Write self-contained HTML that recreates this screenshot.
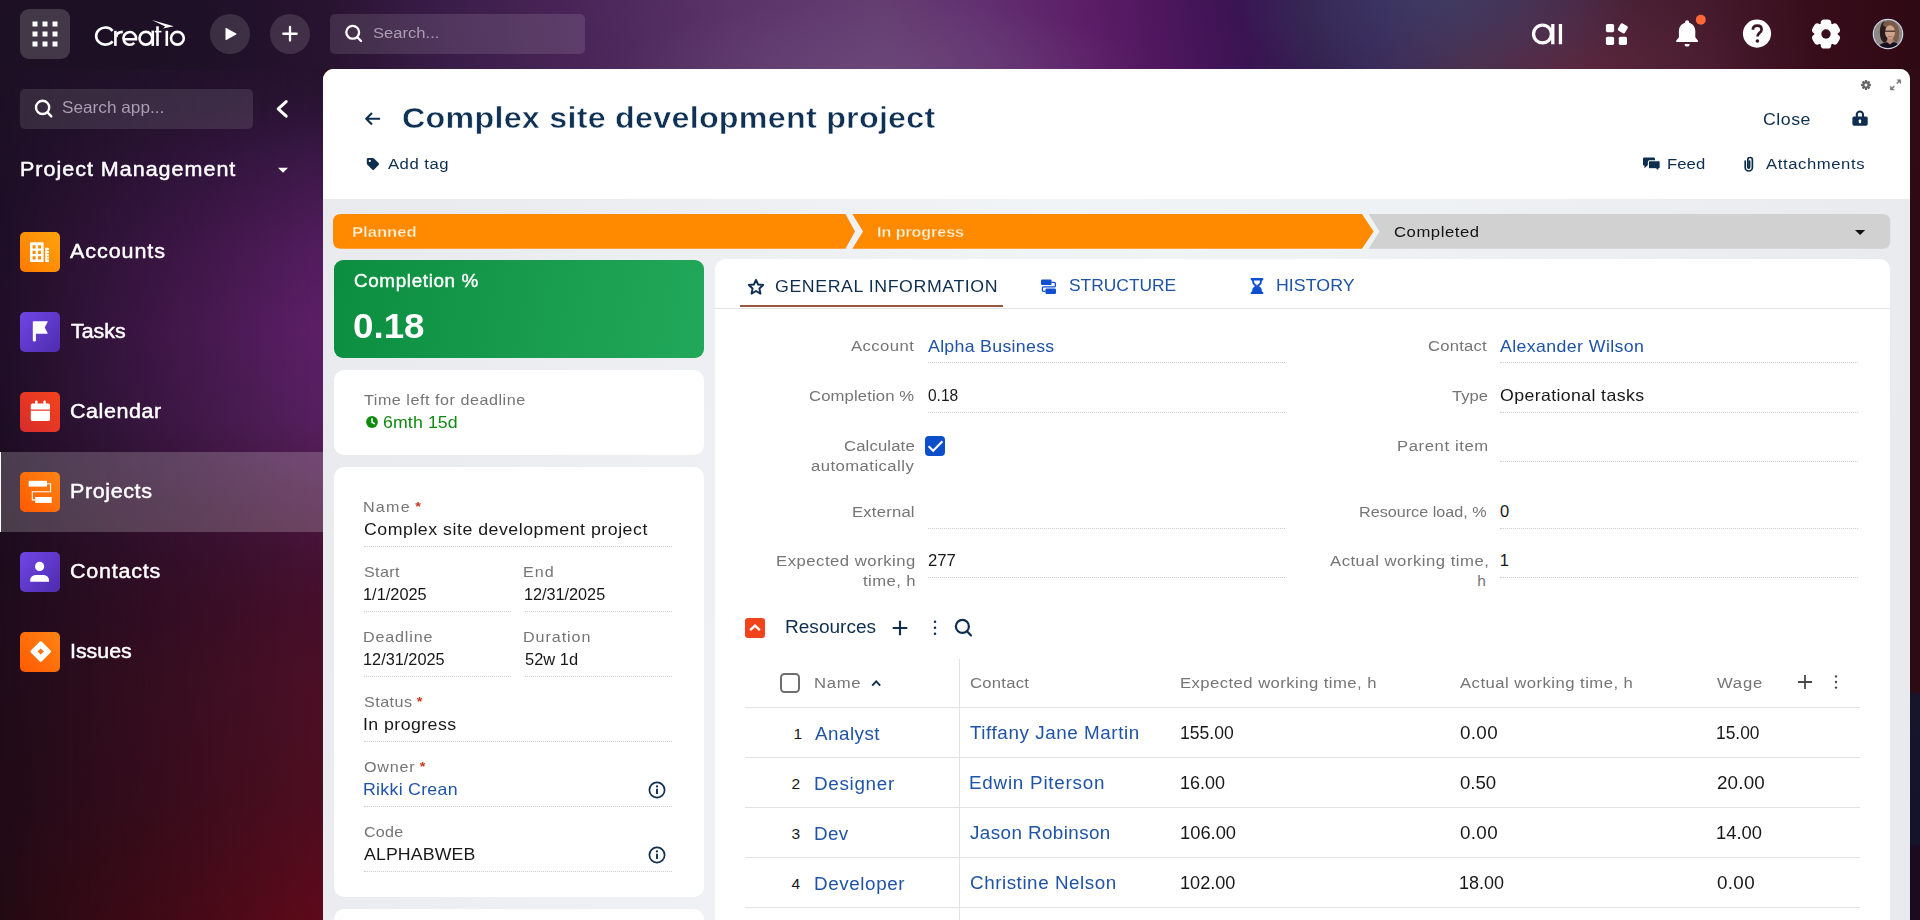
<!DOCTYPE html>
<html lang="en">
<head>
<meta charset="utf-8">
<title>Complex site development project</title>
<style>
*{box-sizing:border-box;margin:0;padding:0}
html,body{width:1920px;height:920px;overflow:hidden}
body{font-family:"Liberation Sans",sans-serif;color:#181818;position:relative;background:#2a0e1a}
#bgtop{left:0;top:0;width:1920px;height:69px;background:
  radial-gradient(ellipse 260px 70px at 880px 69px, rgba(112,76,126,.55), rgba(112,76,126,0) 100%),
  radial-gradient(ellipse 200px 100px at 1435px 0px, rgba(62,62,104,.72), rgba(62,62,104,0) 100%),
  radial-gradient(ellipse 200px 80px at 1560px 69px, rgba(100,40,60,.6), rgba(100,40,60,0) 100%),
  linear-gradient(82deg,#1c1023 0,#1e1026 200px,#27122f 323px,#3b1d49 450px,#4a2558 580px,#5a3468 730px,#643e71 880px,#623070 980px,#5c1e68 1080px,#4e165e 1155px,#3a1452 1235px,#33204f 1305px,#38285a 1380px,#44304f 1455px,#4a2a48 1530px,#4a2238 1600px,#451a2c 1700px,#380d1b 1800px,#2d0813 1920px)}
#bgside{left:0;top:69px;width:323px;height:851px;background:
  linear-gradient(180deg,#26122e 0,#2c1436 40px,#3c1848 91px,#531d5e 181px,#5d1f67 261px,#56205f 351px,#4a1640 441px,#461233 491px,#470f2b 541px,#4c1026 611px,#4e0e21 731px,#5e0a1a 851px)}
#bgside::after{content:"";position:absolute;left:0;top:0;width:323px;height:851px;
  background:linear-gradient(180deg,#1c1024 0,#190d20 120px,#170b1d 400px,#1a0b18 620px,#1c0a12 851px);
  -webkit-mask-image:linear-gradient(90deg,rgba(0,0,0,.9) 0,rgba(0,0,0,.78) 12%,rgba(0,0,0,.6) 32%,rgba(0,0,0,.34) 62%,rgba(0,0,0,.08) 90%,rgba(0,0,0,0) 100%);
  mask-image:linear-gradient(90deg,rgba(0,0,0,.9) 0,rgba(0,0,0,.78) 12%,rgba(0,0,0,.6) 32%,rgba(0,0,0,.34) 62%,rgba(0,0,0,.08) 90%,rgba(0,0,0,0) 100%)}
#bgright{left:1910px;top:69px;width:10px;height:851px;background:linear-gradient(180deg,#300a15 0,#2e0a14 622px,#17152a 626px,#15132a 774px,#1b0a20 778px,#1b0a20 851px)}
.abs{position:absolute}
.t{position:absolute;white-space:nowrap;line-height:1}
/* ---------- top bar ---------- */
#gridbtn{left:20px;top:9px;width:50px;height:50px;border-radius:9px;background:rgba(255,255,255,.17)}
.circ{width:40px;height:40px;border-radius:50%;background:rgba(255,255,255,.13)}
#gsearch{left:330px;top:14px;width:255px;height:40px;border-radius:5px;background:rgba(255,255,255,.115)}
/* ---------- sidebar ---------- */
#asearch{left:20px;top:89px;width:233px;height:40px;border-radius:5px;background:rgba(255,255,255,.11)}
.mi{position:absolute;left:20px;width:40px;height:40px;border-radius:5px}
.ml{position:absolute;left:70px;color:#fff;font-size:20px;white-space:nowrap;line-height:1;-webkit-text-stroke:.45px #fff}
#active{left:0;top:452px;width:323px;height:80px;background:rgba(255,255,255,.2);border-left:1.5px solid #fff}
/* ---------- main ---------- */
#main{left:323px;top:69px;width:1587px;height:851px;background:linear-gradient(105deg,#e8eaed 0%,#eaecef 12%,#f1f4f7 42%,#eff2f5 60%,#e8eaed 92%);border-radius:11px 10px 0 0;overflow:hidden}
#head{left:0;top:0;width:1587px;height:130px;background:#fff}
#green{left:11px;top:191px;width:370px;height:98px;border-radius:9px;background:linear-gradient(100deg,#0b8e3f 0%,#16994a 45%,#22a85a 100%)}
.card{position:absolute;background:#fff;border-radius:10px}
.lbl{position:absolute;white-space:nowrap;line-height:1;color:#757575;font-size:15px}
.val{position:absolute;white-space:nowrap;line-height:1;color:#181818;font-size:15.5px}
.lnk{color:#1e53a6}
.dot{position:absolute;height:0;border-top:1px dotted #d0d0d0}
.req{color:#c9351b;font-weight:bold}
</style>
</head>
<body>
<div class="abs" id="bgtop"></div><div class="abs" id="bgside"></div><div class="abs" id="bgright"></div>
<!-- TOPBAR -->
<div class="abs" id="gridbtn"></div>
<svg class="abs" style="left:30px;top:19px" width="30" height="30" viewBox="30 19 30 30"><g fill="#fff">
<rect x="32.5" y="21.5" width="5" height="5"/><rect x="42.5" y="21.5" width="5" height="5"/><rect x="52.5" y="21.5" width="5" height="5"/>
<rect x="32.5" y="31.5" width="5" height="5"/><rect x="42.5" y="31.5" width="5" height="5"/><rect x="52.5" y="31.5" width="5" height="5"/>
<rect x="32.5" y="41.5" width="5" height="5"/><rect x="42.5" y="41.5" width="5" height="5"/><rect x="52.5" y="41.5" width="5" height="5"/></g></svg>
<svg class="abs" style="left:90px;top:15px" width="100" height="36" viewBox="90 15 100 36"><g fill="none" stroke="#fff" stroke-width="2.6">
<path d="M112.6,30.8 A9.2,8.55 0 1 0 112.6,41.3"/>
<path d="M115.4,45.9 V30.8"/><path d="M116.2,37.2 C116.5,33.8 119,31.9 122.8,31.9"/>
<path d="M123.6,39.3 H136 A6.35,6.35 0 1 0 134.3,42.8"/>
<circle cx="145.85" cy="38.25" r="6.35"/><path d="M152.8,30.6 V45.9"/>
<path d="M157.5,26.3 V45.9"/><path d="M154.8,31.6 H161.5" stroke-width="1.6"/>
<path d="M166.8,30.8 V45.9"/>
<circle cx="177.4" cy="38.25" r="6.4"/></g>
<path d="M151.9,20.1 L173.7,26.35 L163,28.6 L165.2,26.5 Z" fill="#fff"/></svg>
<div class="abs circ" style="left:210px;top:14px"></div>
<svg class="abs" style="left:222px;top:24px" width="20" height="20" viewBox="222 24 20 20"><path d="M226.3,28 L236.2,33.6 Q236.9,34 236.2,34.4 L226.3,40 Q225.5,40.4 225.5,39.5 V28.5 Q225.5,27.6 226.3,28 Z" fill="#fff"/></svg>
<div class="abs circ" style="left:270px;top:14px"></div>
<svg class="abs" style="left:280px;top:24px" width="20" height="20" viewBox="280 24 20 20"><path d="M290,27 V40.5 M283.3,33.75 H296.7" stroke="#fff" stroke-width="2.3" stroke-linecap="round" fill="none"/></svg>
<div class="abs" id="gsearch"></div>
<svg class="abs" style="left:343px;top:22px" width="22" height="22" viewBox="343 22 22 22"><circle cx="352.7" cy="32.3" r="6.4" fill="none" stroke="#fff" stroke-width="2.3"/><path d="M357.4,37.2 L361,41" stroke="#fff" stroke-width="2.3" stroke-linecap="round"/></svg>
<div class="t" id="tx_gsearch" style="left:372.50px;letter-spacing:0.000px;transform:scaleX(1.0704);transform-origin:0 50%;top:25px;font-size:15.5px;color:#aa9db3">Search...</div>
<!-- right icons -->
<svg class="abs" style="left:1528px;top:20px" width="40" height="30" viewBox="1528 20 40 30"><g fill="none" stroke="#fff" stroke-width="3.3"><circle cx="1542.5" cy="34" r="8.95"/><path d="M1552.8,24 V44.3 M1560.45,24 V44.3"/></g></svg>
<svg class="abs" style="left:1603px;top:20px" width="30" height="30" viewBox="1603 20 30 30"><g fill="#fff"><rect x="1605.9" y="24" width="8.2" height="8.2" rx="1.6"/><rect x="1605.9" y="36.7" width="8.2" height="8.2" rx="1.6"/><rect x="1618.8" y="36.7" width="8.2" height="8.2" rx="1.6"/><rect x="1618.7" y="24.3" width="8.2" height="8.2" rx="1.6" transform="rotate(30 1622.8 28.4)"/></g></svg>
<svg class="abs" style="left:1672px;top:12px" width="36" height="40" viewBox="1672 12 36 40"><path d="M1687.1,20.2 c1.2,0 2,0.8 2,2 v0.5 c3.8,1 6.2,4.300000000000001 6.2,8.4 v6.2 l2.700000000000003,3.4 q0.6,1.2 -0.8,1.4 h-20.200000000000003 q-1.4,-0.2 -0.8,-1.4 l2.7,-3.4 v-6.2 c0,-4.1 2.4,-7.4 6.2,-8.4 v-0.5 c0,-1.2 0.8,-2 2,-2 z" fill="#fff"/><path d="M1684.6,44 h5 a2.5,2.6 0 0 1 -5,0 z" fill="#fff"/><circle cx="1700.8" cy="19.7" r="5" fill="#ff6638"/></svg>
<svg class="abs" style="left:1742px;top:18px" width="32" height="32" viewBox="1742 18 32 32"><circle cx="1757" cy="33.6" r="14.1" fill="#fff"/><path d="M1752.9,29.8 c0,-2.8 2,-4.2 4.4,-4.2 c2.5,0 4.3,1.5 4.3,3.8 c0,3.4 -4.1,3.5 -4.1,7.100000000000001" fill="none" stroke="#3b1426" stroke-width="2.7"/><circle cx="1757.4" cy="41" r="1.8" fill="#3b1426"/></svg>
<svg class="abs" style="left:1809.4px;top:17px" width="34" height="34" viewBox="-17 -17 34 34"><g fill="#fff"><circle r="11.6"/><g><rect x="-5.3" y="-14.5" width="10.6" height="9" rx="3.6"/></g><g transform="rotate(60)"><rect x="-5.3" y="-14.5" width="10.6" height="9" rx="3.6"/></g><g transform="rotate(120)"><rect x="-5.3" y="-14.5" width="10.6" height="9" rx="3.6"/></g><g transform="rotate(180)"><rect x="-5.3" y="-14.5" width="10.6" height="9" rx="3.6"/></g><g transform="rotate(240)"><rect x="-5.3" y="-14.5" width="10.6" height="9" rx="3.6"/></g><g transform="rotate(300)"><rect x="-5.3" y="-14.5" width="10.6" height="9" rx="3.6"/></g></g><circle r="4.7" fill="#3a1020"/></svg>
<svg class="abs" style="left:1872px;top:18px" width="32" height="32" viewBox="-1 -1 32 32"><defs><clipPath id="avc"><circle cx="15" cy="15" r="14.4"/></clipPath><filter id="avb" x="-10%" y="-10%" width="120%" height="120%"><feGaussianBlur stdDeviation=".55"/></filter></defs>
<g clip-path="url(#avc)"><rect x="-1" y="-1" width="32" height="32" fill="#8d8786"/><g filter="url(#avb)">
<ellipse cx="23" cy="14.5" rx="3.2" ry="9.5" fill="#7d5c4a"/>
<ellipse cx="11.4" cy="13" rx="4.6" ry="10.4" fill="#2a1b1a"/>
<ellipse cx="16.6" cy="5.2" rx="6.6" ry="3.6" fill="#7a5a48"/>
<path d="M2,31 C4,26 9,24.6 13,23.2 L21,23.2 C25,24.6 27,26 29,31 Z" fill="#13101a"/>
<path d="M14.4,19 h5.2 v4.6 l-2.6,1.8 l-2.6,-1.8 z" fill="#b88c78"/>
<ellipse cx="17" cy="13.2" rx="5" ry="6.9" fill="#cfa38c"/>
<path d="M12,12.2 H22" stroke="#3a2626" stroke-width="1.2"/>
<path d="M14.8,17.2 q2.2,1.3 4.4,0" stroke="#a0625a" stroke-width=".8" fill="none"/>
</g></g><circle cx="15" cy="15" r="14.7" fill="none" stroke="#c9d3e2" stroke-width="1.2"/></svg>
<!-- SIDEBAR -->
<div class="abs" id="asearch"></div>
<svg class="abs" style="left:32px;top:97px" width="24" height="24" viewBox="32 97 24 24"><circle cx="42.6" cy="107.4" r="6.6" fill="none" stroke="#fff" stroke-width="2.4"/><path d="M47.5,112.4 L51.3,116.4" stroke="#fff" stroke-width="2.4" stroke-linecap="round"/></svg>
<div class="t" id="tx_asearch" style="left:62.30px;letter-spacing:0.000px;transform:scaleX(1.0424);transform-origin:0 50%;top:99px;font-size:16.5px;color:#aa9db3">Search app...</div>
<svg class="abs" style="left:272px;top:97px" width="20" height="24" viewBox="272 97 20 24"><path d="M286.2,101.6 L278.2,108.9 L286.2,116.2" fill="none" stroke="#fff" stroke-width="3" stroke-linecap="round" stroke-linejoin="round"/></svg>
<div class="t" id="tx_pm" style="left:19.53px;letter-spacing:0.926px;transform:scaleX(1.0750);transform-origin:0 50%;top:158.8px;font-size:20px;color:#fff;-webkit-text-stroke:.45px #fff">Project Management</div>
<svg class="abs" style="left:276px;top:164px" width="14" height="10" viewBox="276 164 14 10"><path d="M278,167.8 H288 L283,172.8 Z" fill="#fff"/></svg>
<!-- MENU -->
<div class="mi" style="top:232px;background:linear-gradient(45deg,#ff7a00,#ffa40e)"></div>
<svg class="abs" style="left:20px;top:232px" width="40" height="40" viewBox="20 232 40 40"><path fill="#fff" fill-rule="evenodd" d="M31.2,242.3 h11.2 q1.2,0 1.2,1.2 v18.4 h-13.6 v-18.4 q0,-1.200000000000001 1.2,-1.2 z M32.6,245.2 v3.2 h3 v-3.2 z M38,245.2 v3.2 h3 v-3.2 z M32.6,250.7 v3.2 h3 v-3.2 z M38,250.7 v3.2 h3 v-3.2 z M32.6,256.2 v3.2 h3 v-3.2 z M38,256.2 v3.2 h3 v-3.2 z"/><path fill="#fff" d="M45.2,247.8 h2.8 q1,0 1,1 v13.1 h-3.8 z"/><g stroke="#ff9508" stroke-width="1"><path d="M47.2,250.6 h1.8 M47.2,253.4 h1.8 M47.2,256.2 h1.8 M47.2,259 h1.8"/></g></svg>
<div class="ml" id="tx_m1" style="left:70.20px;letter-spacing:0.872px;transform:scaleX(1.0750);transform-origin:0 50%;top:241px">Accounts</div>

<div class="mi" style="top:312px;background:linear-gradient(135deg,#7045e6,#4e2cae)"></div>
<svg class="abs" style="left:20px;top:312px" width="40" height="40" viewBox="20 312 40 40"><path fill="#fff" d="M32.8,322 q0,-0.8 0.8,-0.8 h13.6 q0.9,0 0.4,0.8 l-2.9,5.4 l2.9,5.5 q0.5,0.9 -0.4,0.9 h-11.3 v6.6 q0,1 -1.55,1 q-1.55,0 -1.55,-1 z"/></svg>
<div class="ml" id="tx_m2" style="left:70.60px;letter-spacing:0.000px;transform:scaleX(1.0680);transform-origin:0 50%;top:321px">Tasks</div>

<div class="mi" style="top:392px;background:linear-gradient(45deg,#d62c2c,#f4431c)"></div>
<svg class="abs" style="left:20px;top:392px" width="40" height="40" viewBox="20 392 40 40"><g fill="#fff"><rect x="35.1" y="400.6" width="2.4" height="5" rx="1"/><rect x="43.4" y="400.6" width="2.4" height="5" rx="1"/><path d="M32.4,403.5 h16 q1.6,0 1.6,1.6 v4.4 h-19.2 v-4.4 q0,-1.6 1.6,-1.6 z"/><path d="M30.8,410.8 h19.2 v8.600000000000001 q0,1.6 -1.6,1.6 h-16 q-1.6,0 -1.6,-1.6 z"/></g></svg>
<div class="ml" id="tx_m3" style="left:69.52px;letter-spacing:0.526px;transform:scaleX(1.0750);transform-origin:0 50%;top:401px">Calendar</div>

<div class="abs" id="active"></div>
<div class="mi" style="top:472px;background:linear-gradient(45deg,#ff5a00,#ff8414)"></div>
<svg class="abs" style="left:20px;top:472px" width="40" height="40" viewBox="20 472 40 40"><g fill="#fff"><rect x="28.7" y="480.8" width="18.3" height="5.8"/><rect x="35.2" y="497" width="16.5" height="5.9"/></g><path d="M47,483.7 h3.6 v8.1 h-18.3 v8.1 h2.9" fill="none" stroke="#fff" stroke-width="1.1"/></svg>
<div class="ml" id="tx_m4" style="left:69.92px;letter-spacing:0.560px;transform:scaleX(1.0750);transform-origin:0 50%;top:481px">Projects</div>

<div class="mi" style="top:552px;background:linear-gradient(135deg,#7045e6,#4e2cae)"></div>
<svg class="abs" style="left:20px;top:552px" width="40" height="40" viewBox="20 552 40 40"><g fill="#fff"><circle cx="39.6" cy="566.4" r="4.6"/><path d="M30.200000000000003,581.8 v-1.6 c0,-3.4 3,-5.2 6.4,-5.2 h6 c3.4,0 6.4,1.8 6.4,5.2 v1.6 z"/></g></svg>
<div class="ml" id="tx_m5" style="left:70.12px;letter-spacing:0.722px;transform:scaleX(1.0750);transform-origin:0 50%;top:561px">Contacts</div>

<div class="mi" style="top:632px;background:linear-gradient(45deg,#ff5a00,#ff8414)"></div>
<svg class="abs" style="left:20px;top:632px" width="40" height="40" viewBox="20 632 40 40"><path fill="#fff" fill-rule="evenodd" d="M39.8,641.6 q0.9,-0.9 1.8,0 l9,9 q0.9,0.9 0,1.8 l-9,9 q-0.9,0.9 -1.8,0 l-9,-9 q-0.9,-0.9 0,-1.8 z M40.7,648.4 l-3.1,3.1 l3.1,3.1 l3.1,-3.1 z"/></svg>
<div class="ml" id="tx_m6" style="left:69.93px;letter-spacing:0.000px;transform:scaleX(1.0686);transform-origin:0 50%;top:641px">Issues</div>
<!-- MAIN -->
<div class="abs" id="main">
  <div class="abs" id="head"></div>
  <!-- header -->
  <svg class="abs" style="left:40px;top:42px" width="20" height="16" viewBox="363 111 20 16"><path d="M380,118.8 H366.6 M372,113 L366.2,118.8 L372,124.6" fill="none" stroke="#0d2e4e" stroke-width="2.1" stroke-linejoin="round"/></svg>
  <div class="t" id="tx_title" style="left:79.23px;letter-spacing:0.245px;transform:scaleX(1.0750);transform-origin:0 50%;top:34.1px;font-size:30px;font-weight:bold;color:#0e3155;-webkit-text-stroke:.5px #fff">Complex site development project</div>
  <svg class="abs" style="left:42px;top:87px" width="16" height="16" viewBox="365 156 16 16"><path d="M366.8,159.3 q0,-1.4 1.4,-1.4 h4.4 q0.8,0 1.4,0.6 l4.6,4.6 q1,1 0,2 l-4.4,4.4 q-1,1 -2,0 l-4.8,-4.8 q-0.6,-0.6 -0.6,-1.4 z" fill="#0d2e4e"/><circle cx="369.8" cy="160.9" r="1.1" fill="#fff"/></svg>
  <div class="t" id="tx_addtag" style="left:65.00px;letter-spacing:0.469px;transform:scaleX(1.0750);transform-origin:0 50%;top:87px;font-size:15.5px;color:#0d2e4e">Add tag</div>
  <div class="t" id="tx_close" style="left:1439.60px;letter-spacing:0.475px;transform:scaleX(1.0750);transform-origin:0 50%;top:41.7px;font-size:16.5px;color:#0d2e4e">Close</div>
  <svg class="abs" style="left:1527px;top:38px" width="20" height="22" viewBox="1850 107 20 22"><path d="M1856.8,117 v-2.4 a3.1,3.1 0 0 1 6.2,0 v2.4" fill="none" stroke="#0d2e4e" stroke-width="2.1"/><rect x="1852.4" y="116.4" width="15.3" height="9.4" rx="1.7" fill="#0d2e4e"/><rect x="1858.8" y="119.5" width="2.3" height="3.7" rx=".8" fill="#fff"/></svg>
  <svg class="abs" style="left:1319px;top:87px" width="20" height="16" viewBox="1642 156 20 16"><path d="M1644.2,157.6 h9.6 q1.2,0 1.2,1.2 v5.6 q0,1.2 -1.2,1.2 h-6.4 l-3,2.6 v-2.6 q-1.4,0 -1.4,-1.2 v-5.6 q0,-1.2 1.2,-1.2 z" fill="#0d2e4e"/><path d="M1649.6,160.8 h9.400000000000001 q1.2,0 1.2,1.2 v5.6 q0,1.2 -1.2,1.2 h-0.2 v2.6 l-3,-2.6 h-6.2 q-1.2,0 -1.2,-1.2 v-5.6 q0,-1.2 1.2,-1.2 z" fill="#0d2e4e" stroke="#fff" stroke-width="1.1"/></svg>
  <div class="t" id="tx_feed" style="left:1344.22px;letter-spacing:0.051px;transform:scaleX(1.0750);transform-origin:0 50%;top:87px;font-size:15.5px;color:#0d2e4e">Feed</div>
  <svg class="abs" style="left:1419px;top:86px" width="14" height="18" viewBox="1742 155 14 18"><path d="M1745.2,161 v6.4 a3.6,3.6 0 0 0 7.2,0 v-7.6 a2.3,2.3 0 0 0 -4.6,0 v7.4 a0.9,0.9 0 0 0 1.8,0 v-6.2" fill="none" stroke="#0d2e4e" stroke-width="1.7" stroke-linecap="round"/></svg>
  <div class="t" id="tx_att" style="left:1443.00px;letter-spacing:0.551px;transform:scaleX(1.0750);transform-origin:0 50%;top:87px;font-size:15.5px;color:#0d2e4e">Attachments</div>
  <svg class="abs" style="left:1536px;top:8.8px" width="14" height="14" viewBox="-7 -7 14 14"><g fill="#666"><circle r="3.5"/><g><rect x="-1.15" y="-4.9" width="2.3" height="2.6" rx=".5"/></g><g transform="rotate(45)"><rect x="-1.15" y="-4.9" width="2.3" height="2.6" rx=".5"/></g><g transform="rotate(90)"><rect x="-1.15" y="-4.9" width="2.3" height="2.6" rx=".5"/></g><g transform="rotate(135)"><rect x="-1.15" y="-4.9" width="2.3" height="2.6" rx=".5"/></g><g transform="rotate(180)"><rect x="-1.15" y="-4.9" width="2.3" height="2.6" rx=".5"/></g><g transform="rotate(225)"><rect x="-1.15" y="-4.9" width="2.3" height="2.6" rx=".5"/></g><g transform="rotate(270)"><rect x="-1.15" y="-4.9" width="2.3" height="2.6" rx=".5"/></g><g transform="rotate(315)"><rect x="-1.15" y="-4.9" width="2.3" height="2.6" rx=".5"/></g></g><circle r="1.5" fill="#fff"/></svg>
  <svg class="abs" style="left:1565px;top:9px" width="14" height="14" viewBox="1888 78 14 14"><g fill="none" stroke="#7c7c7c" stroke-width="1.5"><path d="M1900.4,80 l-3.6,3.6 M1890.8,89.6 l3.6,-3.6"/></g><path d="M1896.4,79.4 h4.6 v4.6 z M1894.8,90.200000000000003 h-4.6 v-4.6 z" fill="#7c7c7c"/></svg>

  <!-- stage bar -->
  <svg class="abs" style="left:10px;top:145px" width="1558" height="35" viewBox="333 214 1558 35">
    <path d="M341,214 H845.5 L855,231.4 L845.5,248.8 H341 Q333,248.8 333,240.8 V222 Q333,214 341,214 Z" fill="#ff8a00"/>
    <path d="M852.3,214 H1362 L1373.6,231.4 L1362,248.8 H852.3 L863,231.4 Z" fill="#ff8a00"/>
    <path d="M1368.6,214 H1882.3 Q1890.3,214 1890.3,222 V240.8 Q1890.3,248.8 1882.3,248.8 H1368.6 L1379.6,231.4 Z" fill="#d1d1d1"/>
    <path d="M1855,229.9 H1865.2 L1860.1,235 Z" fill="#111"/>
  </svg>
  <div class="t" id="tx_s1" style="left:28.53px;letter-spacing:0.000px;transform:scaleX(1.0727);transform-origin:0 50%;top:155px;font-size:15.5px;font-weight:bold;color:#fff3df;-webkit-text-stroke:.3px #ff8a00">Planned</div>
  <div class="t" id="tx_s2" style="left:553.97px;letter-spacing:0.000px;transform:scaleX(1.0303);transform-origin:0 50%;top:155px;font-size:15.5px;font-weight:bold;color:#fff3df;-webkit-text-stroke:.3px #ff8a00">In progress</div>
  <div class="t" id="tx_s3" style="left:1071.40px;letter-spacing:0.516px;transform:scaleX(1.0750);transform-origin:0 50%;top:155px;font-size:15.5px;color:#141414">Completed</div>

  <!-- left cards -->
  <div class="abs" id="green"></div>
  <div class="t" id="tx_g1" style="left:30.75px;letter-spacing:0.612px;transform:scaleX(1.0750);transform-origin:0 50%;top:204.2px;font-size:17.5px;color:#fff;-webkit-text-stroke:.4px #fff">Completion %</div>
  <div class="t" id="tx_g2" style="left:29.70px;letter-spacing:0.000px;transform:scaleX(1.0502);transform-origin:0 50%;top:238.7px;font-size:35px;font-weight:bold;color:#fff">0.18</div>

  <div class="card" style="left:11px;top:301px;width:370px;height:85px"></div>
  <div class="lbl" id="tx_tl" style="left:41.25px;letter-spacing:0.494px;transform:scaleX(1.0750);transform-origin:0 50%;top:323px">Time left for deadline</div>
  <svg class="abs" style="left:42px;top:346px" width="14" height="14" viewBox="0 0 14 14"><circle cx="7" cy="7" r="5.9" fill="#0f8a0f"/><path d="M7,3.8 V7.2 L9.4,8.6" fill="none" stroke="#fff" stroke-width="1.5" stroke-linecap="round"/></svg>
  <div class="t" id="tx_tlv" style="left:59.50px;letter-spacing:0.098px;transform:scaleX(1.0750);transform-origin:0 50%;top:345px;font-size:16.5px;color:#0f8a0f">6mth 15d</div>

  <div class="card" style="left:11px;top:398px;width:370px;height:430px"></div>
  <div class="lbl" id="tx_l1" style="left:39.68px;letter-spacing:1.141px;transform:scaleX(1.0750);transform-origin:0 50%;top:430.3px;font-size:15px">Name<span class="req" style="margin-left:4px;font-size:13.5px;position:relative;top:-1px">*</span></div>
  <div class="val " id="tx_v1" style="left:40.75px;letter-spacing:0.484px;transform:scaleX(1.0750);transform-origin:0 50%;top:452.0px;font-size:16.5px">Complex site development project</div>
  <div class="dot" style="left:40.75px;top:477px;width:308.25px"></div>
  <div class="lbl" id="tx_l2" style="left:40.75px;letter-spacing:0.303px;transform:scaleX(1.0750);transform-origin:0 50%;top:495.3px;font-size:15px">Start</div>
  <div class="lbl" id="tx_l3" style="left:200.42px;letter-spacing:0.931px;transform:scaleX(1.0750);transform-origin:0 50%;top:495.3px;font-size:15px">End</div>
  <div class="val " id="tx_v2" style="left:39.76px;letter-spacing:0.000px;transform:scaleX(0.9913);transform-origin:0 50%;top:517.0px;font-size:16.5px">1/1/2025</div>
  <div class="val " id="tx_v3" style="left:200.52px;letter-spacing:0.000px;transform:scaleX(0.9828);transform-origin:0 50%;top:517.0px;font-size:16.5px">12/31/2025</div>
  <div class="dot" style="left:40.75px;top:542px;width:147.5px"></div>
  <div class="dot" style="left:201.5px;top:542px;width:147.5px"></div>
  <div class="lbl" id="tx_l4" style="left:39.68px;letter-spacing:0.770px;transform:scaleX(1.0750);transform-origin:0 50%;top:560.3px;font-size:15px">Deadline</div>
  <div class="lbl" id="tx_l5" style="left:200.42px;letter-spacing:0.863px;transform:scaleX(1.0750);transform-origin:0 50%;top:560.3px;font-size:15px">Duration</div>
  <div class="val " id="tx_v4" style="left:39.76px;letter-spacing:0.000px;transform:scaleX(0.9889);transform-origin:0 50%;top:582.0px;font-size:16.5px">12/31/2025</div>
  <div class="val " id="tx_v5" style="left:201.50px;letter-spacing:0.000px;transform:scaleX(0.9994);transform-origin:0 50%;top:582.0px;font-size:16.5px">52w 1d</div>
  <div class="dot" style="left:40.75px;top:607px;width:147.5px"></div>
  <div class="dot" style="left:201.5px;top:607px;width:147.5px"></div>
  <div class="lbl" id="tx_l6" style="left:40.75px;letter-spacing:0.432px;transform:scaleX(1.0750);transform-origin:0 50%;top:625.3px;font-size:15px">Status<span class="req" style="margin-left:4px;font-size:13.5px;position:relative;top:-1px">*</span></div>
  <div class="val " id="tx_v6" style="left:39.68px;letter-spacing:0.406px;transform:scaleX(1.0750);transform-origin:0 50%;top:647.0px;font-size:16.5px">In progress</div>
  <div class="dot" style="left:40.75px;top:672px;width:308.25px"></div>
  <div class="lbl" id="tx_l7" style="left:40.75px;letter-spacing:0.756px;transform:scaleX(1.0750);transform-origin:0 50%;top:690.3px;font-size:15px">Owner<span class="req" style="margin-left:4px;font-size:13.5px;position:relative;top:-1px">*</span></div>
  <div class="val lnk" id="tx_v7" style="left:39.68px;letter-spacing:0.265px;transform:scaleX(1.0750);transform-origin:0 50%;top:712.0px;font-size:16.5px">Rikki Crean</div>
  <svg class="abs" style="left:323.75px;top:711px" width="20" height="20" viewBox="-10 -10 20 20"><circle r="7.6" fill="none" stroke="#0d2e4e" stroke-width="1.7"/><circle cy="-3.6" r="1.15" fill="#0d2e4e"/><path d="M0,-1.3 V4" stroke="#0d2e4e" stroke-width="1.9"/></svg>
  <div class="dot" style="left:40.75px;top:737px;width:308.25px"></div>
  <div class="lbl" id="tx_l8" style="left:40.75px;letter-spacing:0.176px;transform:scaleX(1.0750);transform-origin:0 50%;top:755.3px;font-size:15px">Code</div>
  <div class="val " id="tx_v8" style="left:40.75px;letter-spacing:0.099px;transform:scaleX(1.0750);transform-origin:0 50%;top:777.0px;font-size:16.5px">ALPHABWEB</div>
  <svg class="abs" style="left:323.75px;top:776px" width="20" height="20" viewBox="-10 -10 20 20"><circle r="7.6" fill="none" stroke="#0d2e4e" stroke-width="1.7"/><circle cy="-3.6" r="1.15" fill="#0d2e4e"/><path d="M0,-1.3 V4" stroke="#0d2e4e" stroke-width="1.9"/></svg>
  <div class="dot" style="left:40.75px;top:802px;width:308.25px"></div>
  <div class="card" style="left:11px;top:840px;width:370px;height:60px"></div>
  <!-- right panel -->
  <div class="card" id="rp" style="left:392px;top:190px;width:1175px;height:700px;border-radius:10px 10px 0 0"></div>
  <div class="abs" style="left:392px;top:239px;width:1175px;height:1px;background:#e3e3e3"></div>
  <div class="abs" style="left:417px;top:236px;width:263px;height:2px;background:#9b5640"></div>
  <svg class="abs" style="left:423px;top:208px" width="20" height="20" viewBox="-10 -10 20 20"><path d="M0,-7.2 L2.1,-2.5 L7.2,-2 L3.4,1.5 L4.5,6.6 L0,4 L-4.5,6.6 L-3.4,1.5 L-7.2,-2 L-2.1,-2.5 Z" fill="none" stroke="#0d2e4e" stroke-width="1.9" stroke-linejoin="round"/></svg>
  <div class="t" id="tx_t1" style="left:452.30px;letter-spacing:0.550px;transform:scaleX(1.0750);transform-origin:0 50%;top:208.6px;font-size:16.5px;color:#0d2e4e;">GENERAL INFORMATION</div>
  <svg class="abs" style="left:716px;top:208px" width="20" height="20" viewBox="1039 277 20 20"><g fill="#0f4fd0"><rect x="1041" y="279.6" width="10.6" height="5.4" rx="1.2"/><rect x="1045.4" y="288.6" width="10.6" height="5.4" rx="1.2"/></g><path d="M1051.6,282.3 h2.6 q1.2,0 1.2,1.2 v2.2 q0,1.200000000000001 -1.2,1.2 h-10.6 q-1.2,0 -1.2,1.2 v2 q0,1.2 1.2,1.2 h1.8" fill="none" stroke="#0f4fd0" stroke-width="1.3"/></svg>
  <div class="t" id="tx_t2" style="left:745.70px;letter-spacing:0.000px;transform:scaleX(1.0536);transform-origin:0 50%;top:208.2px;font-size:16.5px;color:#1e53a6;">STRUCTURE</div>
  <svg class="abs" style="left:925px;top:208px" width="18" height="20" viewBox="1248 277 18 20"><g stroke="#0f4fd0" fill="none"><path d="M1251.8,279.3 h10.4 M1251.8,292.9 h10.4" stroke-width="2.4" stroke-linecap="round"/><path d="M1253.1,280 v1.8 q0,1.6 1.4,2.6 l1.3,1 q0.7,0.7 0,1.4 l-1.3,1 q-1.4,1 -1.4,2.6 v1.8 M1260.9,280 v1.8 q0,1.6 -1.4,2.6 l-1.3,1 q-0.7,0.7 0,1.4 l1.3,1 q1.4,1 1.4,2.6 v1.8" stroke-width="1.9"/></g><path d="M1253.4,292.4 v-1.9 q0,-1.3 1.2,-2.1 l2.4,-1.8 l2.4,1.8 q1.2,0.8 1.2,2.1 v1.9 z" fill="#0f4fd0"/></svg>
  <div class="t" id="tx_t3" style="left:953.42px;letter-spacing:0.059px;transform:scaleX(1.0750);transform-origin:0 50%;top:208.2px;font-size:16.5px;color:#1e53a6;">HISTORY</div>
  <div class="t" id="tx_f1" style="left:527.80px;letter-spacing:0.411px;transform:scaleX(1.0750);transform-origin:0 50%;top:269.4px;font-size:15.5px;color:#757575;">Account</div>
  <div class="t" id="tx_fv1" style="left:604.50px;letter-spacing:0.279px;transform:scaleX(1.0750);transform-origin:0 50%;top:268.5px;font-size:16.5px;color:#1e53a6;">Alpha Business</div>
  <div class="dot" style="left:604.5px;top:293px;width:357.5px"></div>
  <div class="t" id="tx_f2" style="left:486.00px;letter-spacing:0.122px;transform:scaleX(1.0750);transform-origin:0 50%;top:318.9px;font-size:15.5px;color:#757575;">Completion %</div>
  <div class="t" id="tx_fv2" style="left:604.50px;letter-spacing:-0.007px;transform:scaleX(0.9400);transform-origin:0 50%;top:318.0px;font-size:16.5px;color:#181818;">0.18</div>
  <div class="dot" style="left:604.5px;top:343px;width:357.5px"></div>
  <div class="t" id="tx_f3a" style="left:521.40px;letter-spacing:0.140px;transform:scaleX(1.0750);transform-origin:0 50%;top:369.1px;font-size:15.5px;color:#757575;">Calculate</div>
  <div class="t" id="tx_f3b" style="left:488.40px;letter-spacing:0.426px;transform:scaleX(1.0750);transform-origin:0 50%;top:389.1px;font-size:15.5px;color:#757575;">automatically</div>
  <svg class="abs" style="left:602px;top:367px" width="20" height="20" viewBox="0 0 20 20"><rect width="20" height="20" rx="4" fill="#0d4fcb"/><path d="M3.6,10.2 L8.2,14.8 L17.4,5.2" fill="none" stroke="#fff" stroke-width="2"/></svg>
  <div class="t" id="tx_f4" style="left:529.32px;letter-spacing:0.190px;transform:scaleX(1.0750);transform-origin:0 50%;top:435.3px;font-size:15.5px;color:#757575;">External</div>
  <div class="dot" style="left:604.5px;top:459px;width:357.5px"></div>
  <div class="t" id="tx_f5a" style="left:452.72px;letter-spacing:0.485px;transform:scaleX(1.0750);transform-origin:0 50%;top:484.2px;font-size:15.5px;color:#757575;">Expected working</div>
  <div class="t" id="tx_f5b" style="left:539.50px;letter-spacing:0.397px;transform:scaleX(1.0750);transform-origin:0 50%;top:504.3px;font-size:15.5px;color:#757575;">time, h</div>
  <div class="t" id="tx_fv5" style="left:604.80px;letter-spacing:0.000px;transform:scaleX(1.0127);transform-origin:0 50%;top:483.3px;font-size:16.5px;color:#181818;">277</div>
  <div class="dot" style="left:604.5px;top:508px;width:357.5px"></div>
  <div class="t" id="tx_r1" style="left:1104.50px;letter-spacing:0.206px;transform:scaleX(1.0750);transform-origin:0 50%;top:269.4px;font-size:15.5px;color:#757575;">Contact</div>
  <div class="t" id="tx_rv1" style="left:1177.00px;letter-spacing:0.367px;transform:scaleX(1.0750);transform-origin:0 50%;top:268.5px;font-size:16.5px;color:#1e53a6;">Alexander Wilson</div>
  <div class="dot" style="left:1177px;top:293px;width:358px"></div>
  <div class="t" id="tx_r2" style="left:1128.60px;letter-spacing:0.000px;transform:scaleX(1.0733);transform-origin:0 50%;top:318.9px;font-size:15.5px;color:#757575;">Type</div>
  <div class="t" id="tx_rv2" style="left:1177.00px;letter-spacing:0.348px;transform:scaleX(1.0750);transform-origin:0 50%;top:318.0px;font-size:16.5px;color:#181818;">Operational tasks</div>
  <div class="dot" style="left:1177px;top:343px;width:358px"></div>
  <div class="t" id="tx_r3" style="left:1073.72px;letter-spacing:0.563px;transform:scaleX(1.0750);transform-origin:0 50%;top:369.1px;font-size:15.5px;color:#757575;">Parent item</div>
  <div class="dot" style="left:1177px;top:392px;width:358px"></div>
  <div class="t" id="tx_r4" style="left:1036.16px;letter-spacing:0.000px;transform:scaleX(1.0431);transform-origin:0 50%;top:435.3px;font-size:15.5px;color:#757575;">Resource load, %</div>
  <div class="t" id="tx_rv4" style="left:1177.00px;letter-spacing:0.000px;transform:scaleX(1.0000);transform-origin:0 50%;top:434.4px;font-size:16.5px;color:#181818;">0</div>
  <div class="dot" style="left:1177px;top:459px;width:358px"></div>
  <div class="t" id="tx_r5a" style="left:1006.50px;letter-spacing:0.480px;transform:scaleX(1.0750);transform-origin:0 50%;top:484.2px;font-size:15.5px;color:#757575;">Actual working time,</div>
  <div class="t" id="tx_r5b" style="left:1154.20px;letter-spacing:0.000px;transform:scaleX(1.0000);transform-origin:0 50%;top:504.3px;font-size:15.5px;color:#757575;">h</div>
  <div class="t" id="tx_rv5" style="left:1176.80px;letter-spacing:0.000px;transform:scaleX(1.0000);transform-origin:0 50%;top:483.3px;font-size:16.5px;color:#181818;">1</div>
  <div class="dot" style="left:1177px;top:508px;width:358px"></div>
  <svg class="abs" style="left:422px;top:549px" width="20" height="20" viewBox="0 0 20 20"><rect width="20" height="20" rx="3" fill="#f2441c"/><path d="M5.2,12.2 L10,7.6 L14.8,12.2" fill="none" stroke="#fff" stroke-width="2.3" stroke-linejoin="miter"/></svg>
  <div class="t" id="tx_res" style="left:461.94px;letter-spacing:0.000px;transform:scaleX(1.0584);transform-origin:0 50%;top:549.3px;font-size:18px;color:#0d2e4e;">Resources</div>
  <svg class="abs" style="left:567px;top:549px" width="20" height="20" viewBox="-10 -10 20 20"><path d="M-7.3,0 H7.3 M0,-7.3 V7.3" stroke="#0d2e4e" stroke-width="2.1"/></svg>
  <svg class="abs" style="left:607px;top:549px" width="10" height="20" viewBox="-5 -10 10 20"><g fill="#0d2e4e"><circle cy="-6.2" r="1.25"/><circle cy="-0.2" r="1.25"/><circle cy="5.8" r="1.25"/></g></svg>
  <svg class="abs" style="left:629px;top:547px" width="22" height="22" viewBox="-11 -11 22 22"><circle cx="-0.6" cy="-0.6" r="6.5" fill="none" stroke="#0d2e4e" stroke-width="2.2"/><path d="M4.2,4.4 L8,8.4" stroke="#0d2e4e" stroke-width="2.2" stroke-linecap="round"/></svg>
  <div class="abs" style="left:636px;top:590px;width:1px;height:270px;background:#e2e2e2"></div>
  <div class="abs" style="left:422px;top:638px;width:1115px;height:1px;background:#e2e2e2"></div>
  <div class="abs" style="left:422px;top:688px;width:1115px;height:1px;background:#e2e2e2"></div>
  <div class="abs" style="left:422px;top:738px;width:1115px;height:1px;background:#e2e2e2"></div>
  <div class="abs" style="left:422px;top:788px;width:1115px;height:1px;background:#e2e2e2"></div>
  <div class="abs" style="left:422px;top:838px;width:1115px;height:1px;background:#e2e2e2"></div>
  <div class="abs" style="left:457.3px;top:604.2px;width:19.5px;height:19.5px;border:2px solid #6f6f6f;border-radius:4.5px"></div>
  <div class="t" id="tx_h1" style="left:491.12px;letter-spacing:0.650px;transform:scaleX(1.0750);transform-origin:0 50%;top:606.2px;font-size:15.5px;color:#757575;">Name</div>
  <svg class="abs" style="left:547px;top:609px" width="12" height="10" viewBox="870 678 12 10"><path d="M872.2,685.6 L876.2,681.4 L880.2,685.6" fill="none" stroke="#0d2e4e" stroke-width="1.9"/></svg>
  <div class="t" id="tx_h2" style="left:646.80px;letter-spacing:0.222px;transform:scaleX(1.0750);transform-origin:0 50%;top:606.2px;font-size:15.5px;color:#757575;">Contact</div>
  <div class="t" id="tx_h3" style="left:856.92px;letter-spacing:0.416px;transform:scaleX(1.0750);transform-origin:0 50%;top:606.2px;font-size:15.5px;color:#757575;">Expected working time, h</div>
  <div class="t" id="tx_h4" style="left:1136.80px;letter-spacing:0.438px;transform:scaleX(1.0750);transform-origin:0 50%;top:606.2px;font-size:15.5px;color:#757575;">Actual working time, h</div>
  <div class="t" id="tx_h5" style="left:1394.20px;letter-spacing:0.700px;transform:scaleX(1.0750);transform-origin:0 50%;top:606.2px;font-size:15.5px;color:#757575;">Wage</div>
  <svg class="abs" style="left:1471.5px;top:603.4px" width="20" height="20" viewBox="-10 -10 20 20"><path d="M-7,0 H7 M0,-7 V7" stroke="#4a4a4a" stroke-width="1.8"/></svg>
  <svg class="abs" style="left:1507.5px;top:603px" width="10" height="20" viewBox="-5 -10 10 20"><g fill="#4a4a4a"><circle cy="-5.6" r="1.2"/><circle cy="0" r="1.2"/><circle cy="5.6" r="1.2"/></g></svg>
  <div class="t" id="tx_n0" style="left:470.40px;letter-spacing:0.000px;transform:scaleX(1.0000);transform-origin:0 50%;top:656.7px;font-size:15.5px;color:#181818;">1</div>
  <div class="t" id="tx_a0" style="left:492.30px;letter-spacing:0.443px;transform:scaleX(1.0750);transform-origin:0 50%;top:657.0px;font-size:17.5px;color:#1e53a6;">Analyst</div>
  <div class="t" id="tx_b0" style="left:646.90px;letter-spacing:0.530px;transform:scaleX(1.0750);transform-origin:0 50%;top:655.9px;font-size:17.5px;color:#1e53a6;">Tiffany Jane Martin</div>
  <div class="t" id="tx_c0" style="left:857.00px;letter-spacing:-0.000px;transform:scaleX(1.0020);transform-origin:0 50%;top:655.9px;font-size:17.5px;color:#181818;">155.00</div>
  <div class="t" id="tx_d0" style="left:1136.80px;letter-spacing:0.309px;transform:scaleX(1.0750);transform-origin:0 50%;top:655.9px;font-size:17.5px;color:#181818;">0.00</div>
  <div class="t" id="tx_e0" style="left:1393.21px;letter-spacing:0.000px;transform:scaleX(0.9940);transform-origin:0 50%;top:655.9px;font-size:17.5px;color:#181818;">15.00</div>
  <div class="t" id="tx_n1" style="right:1110px;top:706.7px;font-size:15.5px;color:#181818;">2</div>
  <div class="t" id="tx_a1" style="left:491.42px;letter-spacing:0.652px;transform:scaleX(1.0750);transform-origin:0 50%;top:707.0px;font-size:17.5px;color:#1e53a6;">Designer</div>
  <div class="t" id="tx_b1" style="left:645.82px;letter-spacing:0.714px;transform:scaleX(1.0750);transform-origin:0 50%;top:705.9px;font-size:17.5px;color:#1e53a6;">Edwin Piterson</div>
  <div class="t" id="tx_c1" style="left:856.97px;letter-spacing:0.000px;transform:scaleX(1.0265);transform-origin:0 50%;top:705.9px;font-size:17.5px;color:#181818;">16.00</div>
  <div class="t" id="tx_d1" style="left:1136.80px;letter-spacing:0.000px;transform:scaleX(1.0633);transform-origin:0 50%;top:705.9px;font-size:17.5px;color:#181818;">0.50</div>
  <div class="t" id="tx_e1" style="left:1394.20px;letter-spacing:0.148px;transform:scaleX(1.0750);transform-origin:0 50%;top:705.9px;font-size:17.5px;color:#181818;">20.00</div>
  <div class="t" id="tx_n2" style="right:1110px;top:756.7px;font-size:15.5px;color:#181818;">3</div>
  <div class="t" id="tx_a2" style="left:491.42px;letter-spacing:0.350px;transform:scaleX(1.0750);transform-origin:0 50%;top:757.0px;font-size:17.5px;color:#1e53a6;">Dev</div>
  <div class="t" id="tx_b2" style="left:646.90px;letter-spacing:0.385px;transform:scaleX(1.0750);transform-origin:0 50%;top:755.9px;font-size:17.5px;color:#1e53a6;">Jason Robinson</div>
  <div class="t" id="tx_c2" style="left:856.95px;letter-spacing:0.000px;transform:scaleX(1.0475);transform-origin:0 50%;top:755.9px;font-size:17.5px;color:#181818;">106.00</div>
  <div class="t" id="tx_d2" style="left:1136.80px;letter-spacing:0.309px;transform:scaleX(1.0750);transform-origin:0 50%;top:755.9px;font-size:17.5px;color:#181818;">0.00</div>
  <div class="t" id="tx_e2" style="left:1393.15px;letter-spacing:0.000px;transform:scaleX(1.0497);transform-origin:0 50%;top:755.9px;font-size:17.5px;color:#181818;">14.00</div>
  <div class="t" id="tx_n3" style="right:1110px;top:806.7px;font-size:15.5px;color:#181818;">4</div>
  <div class="t" id="tx_a3" style="left:491.42px;letter-spacing:0.563px;transform:scaleX(1.0750);transform-origin:0 50%;top:807.0px;font-size:17.5px;color:#1e53a6;">Developer</div>
  <div class="t" id="tx_b3" style="left:646.90px;letter-spacing:0.507px;transform:scaleX(1.0750);transform-origin:0 50%;top:805.9px;font-size:17.5px;color:#1e53a6;">Christine Nelson</div>
  <div class="t" id="tx_c3" style="left:856.96px;letter-spacing:0.000px;transform:scaleX(1.0361);transform-origin:0 50%;top:805.9px;font-size:17.5px;color:#181818;">102.00</div>
  <div class="t" id="tx_d3" style="left:1135.77px;letter-spacing:0.000px;transform:scaleX(1.0265);transform-origin:0 50%;top:805.9px;font-size:17.5px;color:#181818;">18.00</div>
  <div class="t" id="tx_e3" style="left:1394.20px;letter-spacing:0.309px;transform:scaleX(1.0750);transform-origin:0 50%;top:805.9px;font-size:17.5px;color:#181818;">0.00</div>
</div>
</body>
</html>
